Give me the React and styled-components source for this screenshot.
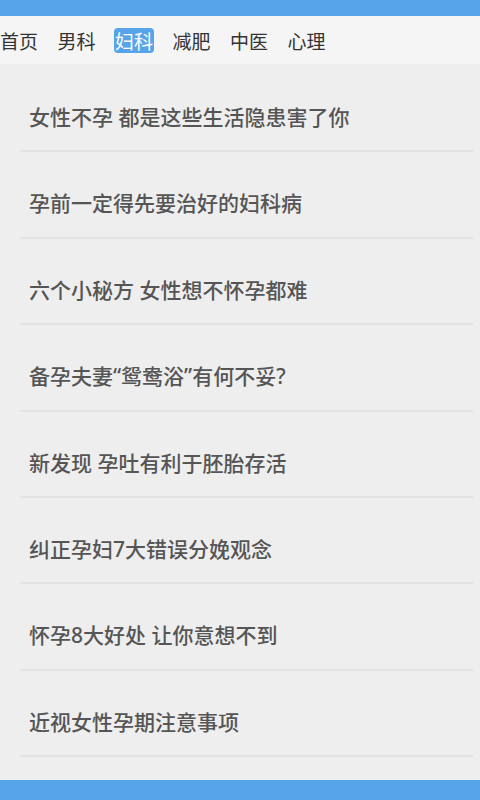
import React from 'react';
import styled, { createGlobalStyle } from 'styled-components';

const GlobalStyle = createGlobalStyle`
  html, body {
    margin: 0;
    padding: 0;
    background: #eeeeee;
  }
  * {
    box-sizing: border-box;
  }
`;

const Page = styled.div`
  display: flex;
  flex-direction: column;
  width: 480px;
  height: 800px;
  background: #eeeeee;
  font-family: "Noto Sans CJK SC", "Noto Sans", sans-serif;
`;

const StatusBar = styled.div`
  height: 16px;
  background: #57a4eb;
  flex-shrink: 0;
`;

const BottomBar = styled.div`
  height: 20px;
  background: #57a4eb;
  flex-shrink: 0;
`;

const TabBar = styled.nav`
  display: flex;
  align-items: center;
  gap: 17.5px;
  height: 48px;
  background: #f5f5f5;
  flex-shrink: 0;
`;

const Tab = styled.span`
  display: flex;
  align-items: center;
  height: 25px;
  padding: 0 1px;
  margin-left: ${props => props.first ? '-1px' : '0'};
  border-radius: 4px;
  font-size: 19px;
  color: ${props => props.active ? '#fff' : '#333'};
  background: ${props => props.active ? '#57a4eb' : 'transparent'};
`;

const List = styled.ul`
  flex-grow: 1;
  margin: 2px 0 0;
  padding: 0;
  list-style: none;
`;

const Item = styled.li`
  height: 86.4px;
  margin: 0 7px 0 20px;
  padding: 39px 0 0 9px;
  border-bottom: 2px solid #e3e3e3;
  font-family: "Noto Sans", "Noto Sans CJK SC", sans-serif;
  font-size: 21px;
  line-height: 24px;
  font-weight: 500;
  color: #555;
  white-space: nowrap;
`;

const tabs = ['首页', '男科', '妇科', '减肥', '中医', '心理'];

const articles = [
  '女性不孕 都是这些生活隐患害了你',
  '孕前一定得先要治好的妇科病',
  '六个小秘方 女性想不怀孕都难',
  '备孕夫妻“鸳鸯浴”有何不妥?',
  '新发现 孕吐有利于胚胎存活',
  '纠正孕妇7大错误分娩观念',
  '怀孕8大好处 让你意想不到',
  '近视女性孕期注意事项',
];

export default function App() {
  return (
    <Page>
      <GlobalStyle />
      <StatusBar />
      <TabBar>
        {tabs.map((tab, index) => (
          <Tab key={tab} first={index === 0} active={tab === '妇科'}>{tab}</Tab>
        ))}
      </TabBar>
      <List>
        {articles.map(title => <Item key={title}>{title}</Item>)}
      </List>
      <BottomBar />
    </Page>
  );
}
